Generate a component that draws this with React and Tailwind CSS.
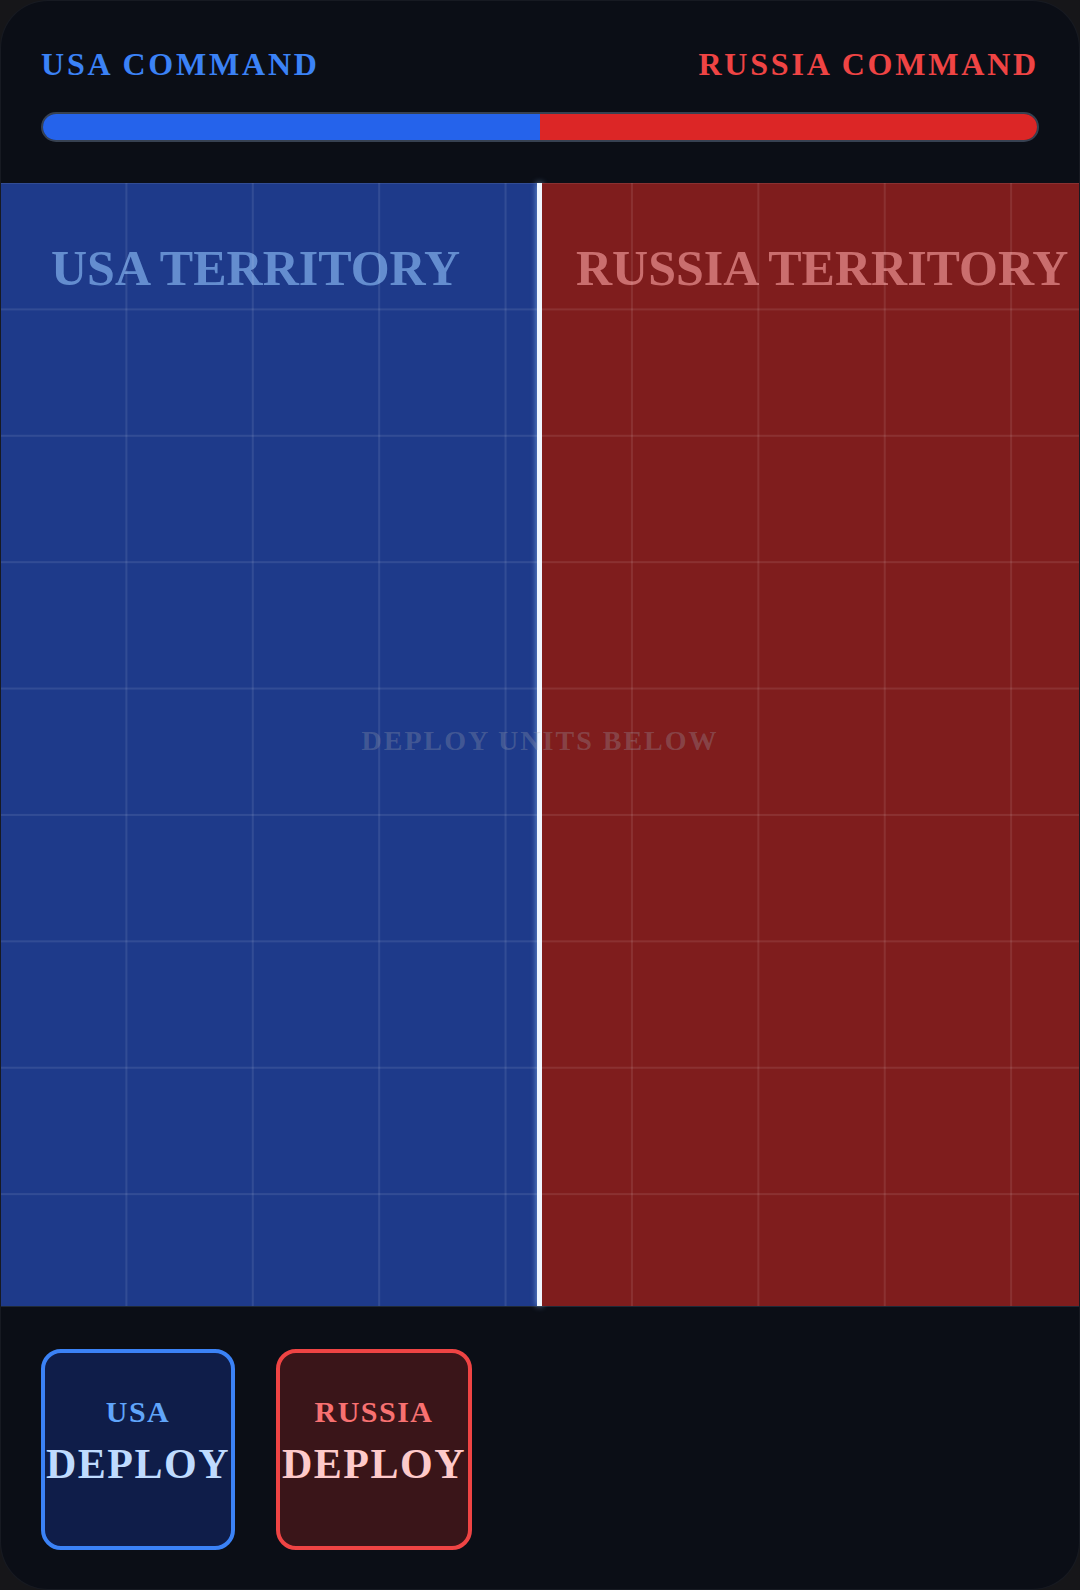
import React from "react";

const serif = "font-['Liberation_Serif','Times_New_Roman',serif]";

function DeployButton({ side }) {
  const usa = side === "usa";
  return (
    <button
      className={`flex h-[201px] flex-col items-center justify-center rounded-[20px] border-[4px] pb-[18px] ${
        usa ? "w-[194px] border-[#3b82f6] bg-[#0f1d49]" : "w-[196px] border-[#ef4444] bg-[#3a1519]"
      }`}
    >
      <span
        className={`${serif} text-[30px] font-bold leading-none tracking-[1.5px] ${
          usa ? "text-[#60a5fa]" : "text-[#f87171]"
        }`}
      >
        {usa ? "USA" : "RUSSIA"}
      </span>
      <span
        className={`${serif} mt-[16px] text-[42px] font-bold leading-none tracking-[1.5px] ${
          usa ? "text-[#bfdbfe]" : "text-[#fecaca]"
        }`}
      >
        DEPLOY
      </span>
    </button>
  );
}

export default function App() {
  return (
    <div className="h-[1590px] w-[1080px] bg-[#161619]">
      <div className="flex h-full w-full flex-col overflow-hidden rounded-[48px] border border-white/5 bg-[#0b0e16]">
        {/* command header with strength bar */}
        <header className="h-[182px] shrink-0 px-[40px] pt-[47px]">
          <div className={`${serif} flex h-[32px] items-center justify-between text-[32px] font-bold leading-none tracking-[2.8px]`}>
            <span className="text-[#3b82f6]">USA COMMAND</span>
            <span className="text-[#ef4444]">RUSSIA COMMAND</span>
          </div>
          <div className="mt-[32px] flex h-[30px] overflow-hidden rounded-full border-2 border-[#374151] bg-[#1f2937]">
            <div className="w-1/2 bg-[#2563eb]" />
            <div className="w-1/2 bg-[#dc2626]" />
          </div>
        </header>

        {/* battlefield */}
        <div className="relative flex h-[1123px] shrink-0">
          <div className="w-[536px] shrink-0 bg-[#1e3a8a] pl-[50px] pt-[60px]">
            <h2 className={`${serif} whitespace-nowrap text-[50px] font-bold leading-none text-[#93c5fd]/60`}>
              USA TERRITORY
            </h2>
          </div>
          <div className="w-[5px] shrink-0 bg-[#eff6ff] shadow-[0_0_6px_rgba(147,197,253,0.8)]" />
          <div className="min-w-0 flex-1 bg-[#7f1d1d] pl-[34px] pt-[60px]">
            <h2 className={`${serif} whitespace-nowrap text-[50px] font-bold leading-none text-[#fca5a5]/60`}>
              RUSSIA TERRITORY
            </h2>
          </div>
          <div className="pointer-events-none absolute inset-0 bg-[linear-gradient(to_right,rgba(255,255,255,0.09)_2px,transparent_2px),linear-gradient(to_bottom,rgba(255,255,255,0.09)_2px,transparent_2px)] bg-[size:126.4px_126.4px] bg-[position:-2px_-1px]" />
          <div className="pointer-events-none absolute inset-0 flex items-center justify-center pb-[8px]">
            <span className={`${serif} text-[28px] font-bold leading-none tracking-[2px] text-[#9ca3af]/30`}>
              DEPLOY UNITS BELOW
            </span>
          </div>
        </div>

        {/* unit tray */}
        <footer className="flex flex-1 gap-[41px] border-t border-[#1f2937] px-[40px] pt-[42px]">
          <DeployButton side="usa" />
          <DeployButton side="russia" />
        </footer>
      </div>
    </div>
  );
}
